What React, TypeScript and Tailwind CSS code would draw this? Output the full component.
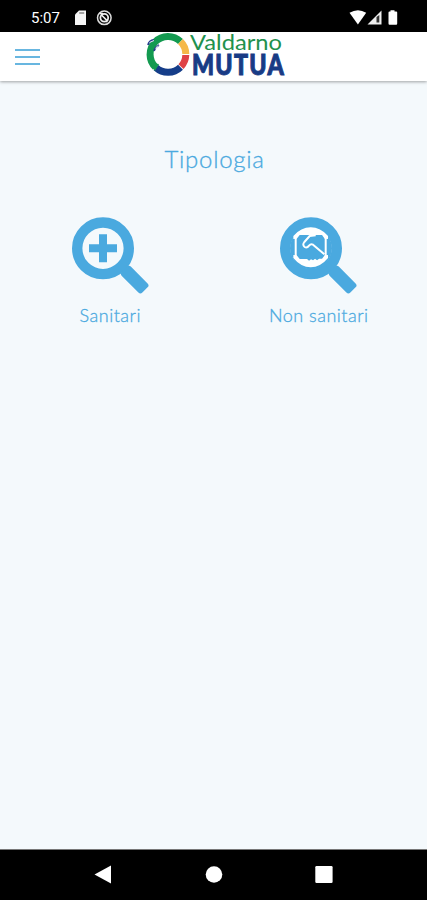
import type { ReactNode } from 'react';

function StatusBar() {
  return (
    <header className="flex h-8 shrink-0 items-center bg-black text-white">
      <span className="ml-[31px] mt-1 w-[43px] font-['Roboto',sans-serif] text-[15px] leading-none">5:07</span>
      <svg className="mt-1 h-4 w-[45px]" viewBox="74 10 45 16">
        <path d="M79 10.500h7v14.500H75V14.500z" fill="#f5f5f5" />
        <path d="M79.200 13h5" stroke="#777" strokeWidth="1.300" />
        <circle cx="104.300" cy="17.800" r="6.800" fill="none" stroke="#ddd" strokeWidth="1.500" />
        <circle cx="104.300" cy="17.800" r="3.900" fill="none" stroke="#eee" strokeWidth="1.800" />
        <path d="M101 14.500l6.600 6.600M99.500 13.500h3.500M106 22l2-2" stroke="#eee" strokeWidth="1.600" />
      </svg>
      <svg className="ml-auto mr-[28px] mt-1 h-4 w-[50px]" viewBox="349 10 50 16">
        <path d="M349.500 12.800Q358 7.700 366.200 12.800L357.900 24.500z" fill="#fff" />
        <path d="M367.500 24.500L381.500 10.500v14z" fill="#eee" />
        <path d="M376.500 17l2.800-2v7.500h-2.800z" fill="#333" />
        <path d="M390.500 10.300h4v1.200h1.700q1 0 1 1v11q0 1.300-1 1.300h-6.700q-1 0-1-1.300v-11q0-1 1-1h1z" fill="#fff" />
      </svg>
    </header>
  );
}

function Logo() {
  return (
    <svg className="h-12 w-[144px] overflow-visible" viewBox="144 32 144 48">
      <g fill="none" strokeWidth="7">
        <path d="M155.500 67.200A17.800 17.800 0 0 1 180.500 41.500" stroke="#139a50" />
        <path d="M180.500 41.500A17.800 17.800 0 0 1 185.800 54" stroke="#f5b849" />
        <path d="M185.800 55A17.800 17.800 0 0 1 181 66.600" stroke="#df4246" />
        <path d="M180.500 67.200A17.800 17.800 0 0 1 156 67.600" stroke="#153d89" />
      </g>
      <path d="M148 45q1-4.500 6-5M154 51q1.500-4.500 5-6" fill="none" stroke="#263d8b" strokeWidth="1.800" />
      <path d="M149.500 42.500l4.500-2M155.500 48.500l2.500-3" fill="none" stroke="#fff" strokeWidth="0.900" />
      <path d="M150 63l9 1-4 7z" fill="#139a50" />
      <text x="190" y="50" fill="#21914d" fontFamily="Lato, sans-serif" fontSize="22" textLength="92" lengthAdjust="spacingAndGlyphs">Valdarno</text>
      <text x="192" y="74.700" fill="#183b85" stroke="#183b85" strokeWidth="1" fontFamily="Lato, sans-serif" fontWeight="900" fontSize="27.500" letterSpacing="1.500" textLength="93" lengthAdjust="spacingAndGlyphs">MUTUA</text>
    </svg>
  );
}

function Magnifier({ children }: { children: ReactNode }) {
  return (
    <svg className="h-[77px] w-[77px]" viewBox="0 0 77 77" fill="none">
      <circle cx="31" cy="31.300" r="25.800" stroke="#4aa9df" strokeWidth="10.400" />
      <path d="M48 48l6 6" stroke="#4aa9df" strokeWidth="5" />
      <rect x="52" y="-6.500" width="29" height="13" rx="2.800" transform="translate(15.700 15.700) rotate(45)" fill="#4aa9df" />
      {children}
    </svg>
  );
}

function Category({ label, children }: { label: string; children: ReactNode }) {
  return (
    <button type="button" className="flex flex-col items-center">
      <Magnifier>{children}</Magnifier>
      <span className="mt-[9px] whitespace-nowrap text-[18px] leading-6 tracking-[0.5px]">{label}</span>
    </button>
  );
}

export default function App() {
  return (
    <div className="flex h-[900px] w-[427px] flex-col overflow-hidden bg-[#f4f9fc]">
      <StatusBar />
      <nav className="relative flex h-[49px] shrink-0 bg-white shadow-[0_1px_3px_rgba(0,0,0,0.35)]">
        <button type="button" aria-label="Menu" className="ml-[15px] mt-[17px] flex h-[16px] w-[25px] flex-col justify-between">
          <span className="h-[2px] w-full bg-[#68b6e0]" />
          <span className="h-[2px] w-full bg-[#68b6e0]" />
          <span className="h-[2px] w-full bg-[#68b6e0]" />
        </button>
        <div className="ml-[104px]">
          <Logo />
        </div>
      </nav>
      <main className="flex-1 font-['Lato',sans-serif] font-light text-[#4aa9df] [-webkit-text-stroke:0.3px_#4aa9df]">
        <h1 className="mt-[62px] pl-[2px] text-center text-[24px] leading-8 tracking-[0.7px]">Tipologia</h1>
        <div className="mt-[42px] grid grid-cols-2 pl-[6px] pr-1">
          <Category label="Sanitari">
            <path d="M31 17.300v28M17 31.300h28" stroke="#4aa9df" strokeWidth="8" />
          </Category>
          <Category label="Non sanitari">
            <circle cx="31" cy="31.300" r="21" fill="#4aa9df" />
            <g transform="translate(7.700 8) scale(0.3333)">
              <path d="M17 42V33Q40 7 69 7T121 33V42L111 41L103 30H36L27 41z" fill="#fff" />
              <path d="M17 90V99Q40 127 69 127T121 99V90L111 91L103 101H94L88 106L82 101L76 106L70 103L64 107L58 102H36L27 91z" fill="#fff" />
              <path d="M24 38V94M114 38V94" stroke="#fff" strokeWidth="6" />
              <path d="M84 31L66 33L50 51Q43 60 51 66Q58 70 64 62Q69 56 76 59L110 88" stroke="#fff" strokeWidth="6" strokeLinejoin="round" />
            </g>
          </Category>
        </div>
      </main>
      <footer className="flex h-[51px] shrink-0 items-center border-t border-[#777] bg-black">
        <svg className="h-[50px] w-full" viewBox="0 850 427 50" fill="#fff">
          <path d="M94.500 874.500L111 865.500v18z" />
          <circle cx="214" cy="874.500" r="8.300" />
          <rect x="315.300" y="866" width="17.300" height="17" rx="1.200" />
        </svg>
      </footer>
    </div>
  );
}
